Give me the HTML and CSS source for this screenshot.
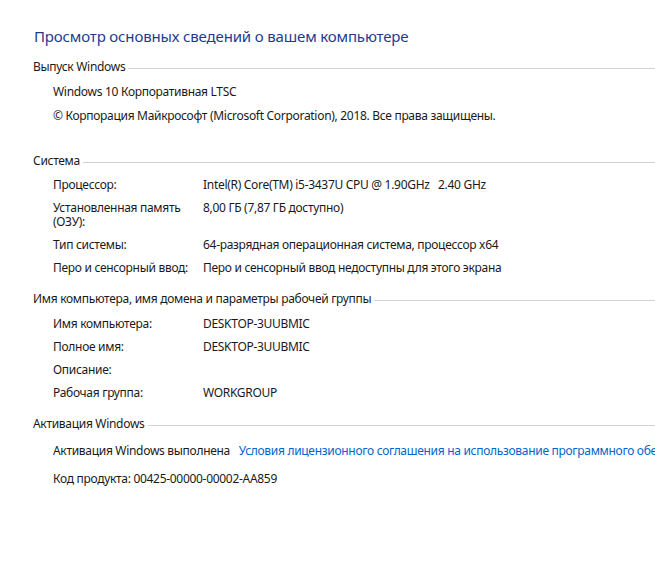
FILE: index.html
```html
<!DOCTYPE html>
<html lang="ru">

<head>
    <meta charset="UTF-8">
    <meta name="viewport" content="width=device-width, initial-scale=1.0">
    <title>Система</title>
    <link rel="stylesheet" href="styles.css">
</head>

<body>
    <div class="page">
        <h1 class="title">Просмотр основных сведений о вашем компьютере</h1>

        <section class="group group-edition">
            <div class="group-head"><span>Выпуск Windows</span></div>
            <div class="lines">
                <div>Windows 10 Корпоративная LTSC</div>
                <div>© Корпорация Майкрософт (Microsoft Corporation), 2018. Все права защищены.</div>
            </div>
        </section>

        <section class="group group-system">
            <div class="group-head"><span>Система</span></div>
            <div class="props">
                <div class="label">Процессор:</div>
                <div class="value">Intel(R) Core(TM) i5-3437U CPU @ 1.90GHz&nbsp;&nbsp; 2.40 GHz</div>
                <div class="label">Установленная память (ОЗУ):</div>
                <div class="value">8,00 ГБ (7,87 ГБ доступно)</div>
                <div class="label">Тип системы:</div>
                <div class="value">64-разрядная операционная система, процессор x64</div>
                <div class="label">Перо и сенсорный ввод:</div>
                <div class="value">Перо и сенсорный ввод недоступны для этого экрана</div>
            </div>
        </section>

        <section class="group group-network">
            <div class="group-head"><span>Имя компьютера, имя домена и параметры рабочей группы</span></div>
            <div class="props">
                <div class="label">Имя компьютера:</div>
                <div class="value">DESKTOP-3UUBMIC</div>
                <div class="label">Полное имя:</div>
                <div class="value">DESKTOP-3UUBMIC</div>
                <div class="label">Описание:</div>
                <div class="value"></div>
                <div class="label">Рабочая группа:</div>
                <div class="value">WORKGROUP</div>
            </div>
        </section>

        <section class="group group-activation">
            <div class="group-head"><span>Активация Windows</span></div>
            <div class="lines activation">
                <div class="nowrap">Активация Windows выполнена <a href="#" class="link">Условия лицензионного соглашения на использование программного обеспечения корпорации Майкрософт</a></div>
                <div>Код продукта: <span class="key">00425-00000-00002-AA859</span></div>
            </div>
        </section>
    </div>
</body>

</html>
```

FILE: styles.css
```css
html, body {
    margin: 0;
    background: #fff;
    overflow: hidden;
}

body {
    font-family: "Noto Sans", "Open Sans", sans-serif;
    font-size: 12px;
    line-height: 14px;
    letter-spacing: -0.3px;
    color: #1a1a1a;
}

.page {
    padding: 26px 0 0 33px;
}

.title {
    margin: 0 0 14px 1px;
    font-size: 15px;
    line-height: 20px;
    letter-spacing: -0.15px;
    font-weight: normal;
    color: #1e3b8f;
}

.group {
    margin-bottom: 17px;
}

.group-edition {
    margin-bottom: 31px;
}

.group-head {
    display: flex;
    align-items: center;
    margin-bottom: 11px;
}

.group-system .group-head {
    margin-bottom: 10px;
}

.group-activation .group-head {
    margin-bottom: 13px;
}

.group-head::after {
    content: "";
    flex: 1;
    height: 1px;
    margin: 2px 0 0 3px;
    background: #d2d2d2;
}

.lines {
    padding-left: 20px;
    display: flex;
    flex-direction: column;
    gap: 10px;
}

.props {
    padding-left: 20px;
    display: grid;
    grid-template-columns: 150px 1fr;
    row-gap: 9px;
}

.activation {
    gap: 14px;
}

.nowrap {
    white-space: nowrap;
}

.link {
    margin-left: 6px;
    color: #0066cc;
    text-decoration: none;
}
```
